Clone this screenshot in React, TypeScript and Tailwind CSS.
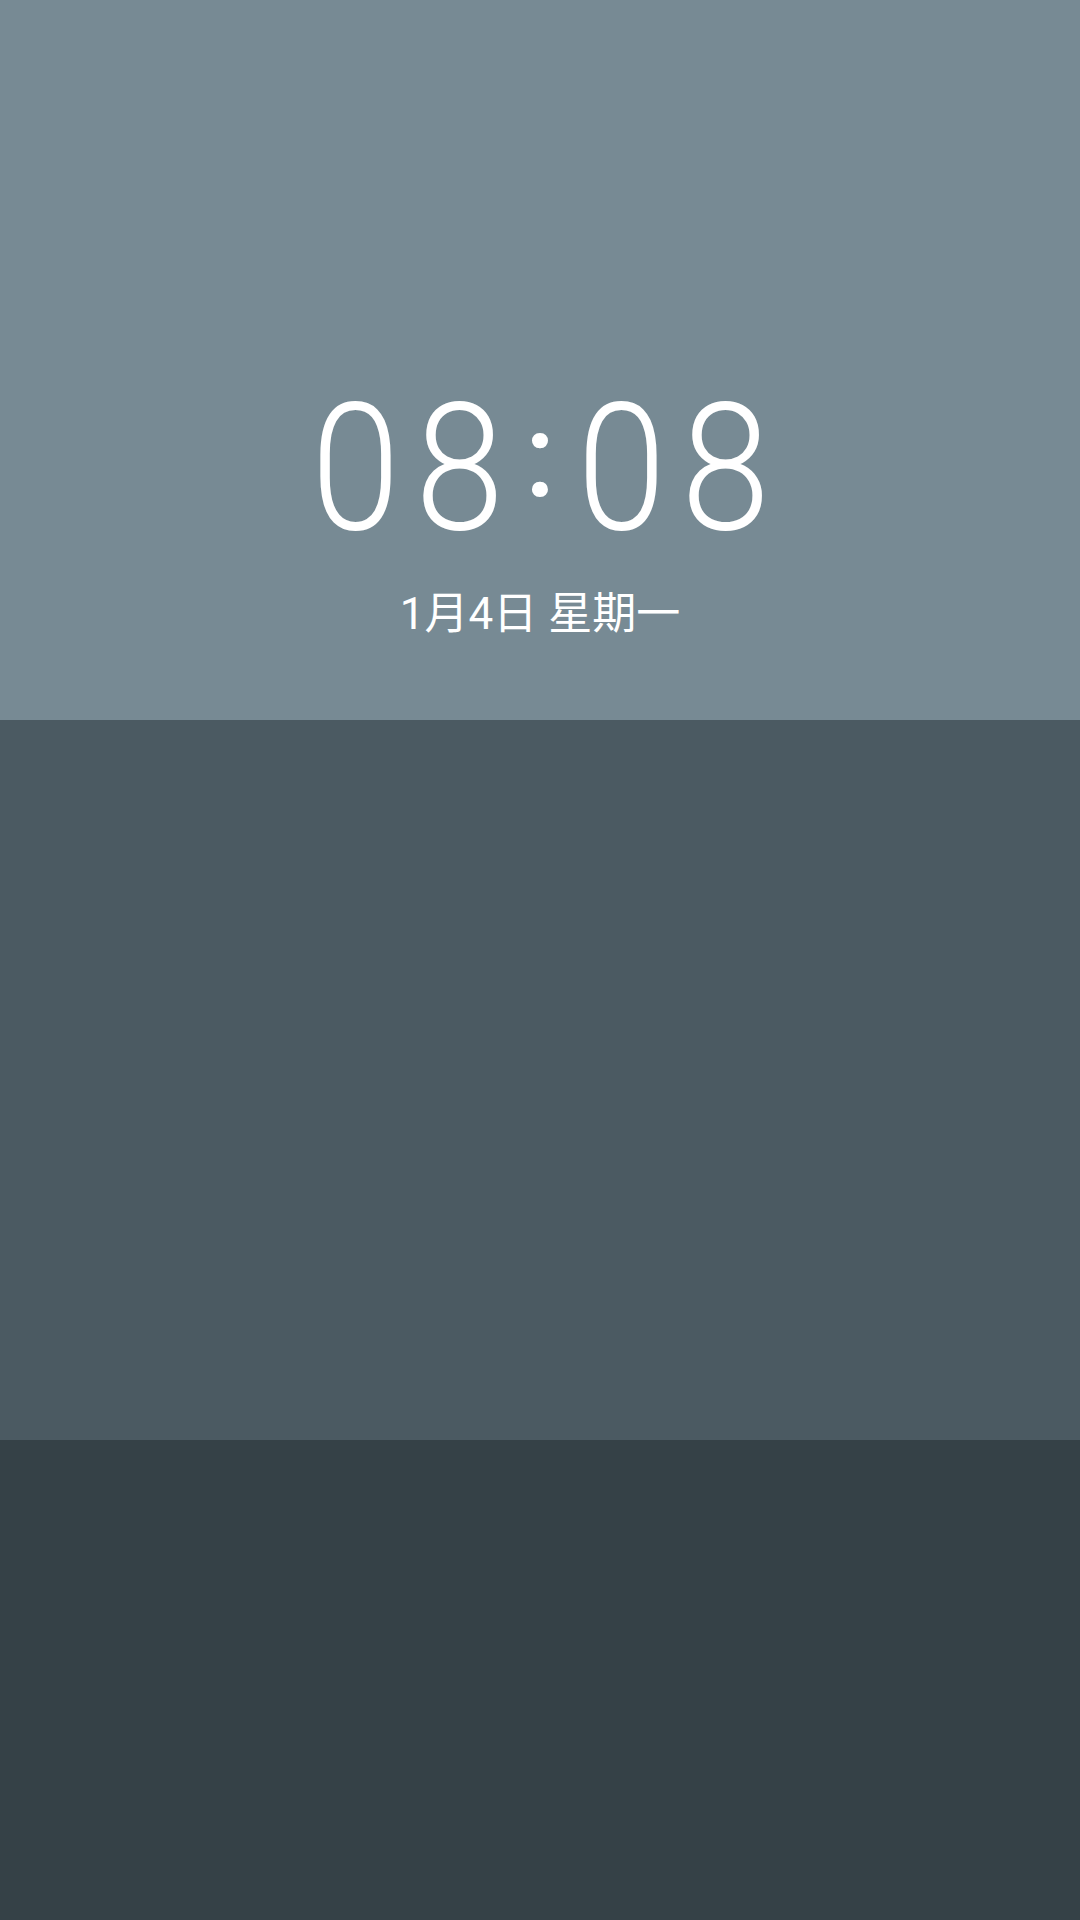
import React from 'react';

const Digit = ({ d }: { d: string }) => (
  <span className="w-[104px] text-center">
    <span className="inline-block scale-x-[0.9]">{d}</span>
  </span>
);

const LockScreen = () => {
  return (
    <div className="w-[1080px] h-[1920px] flex flex-col font-['Roboto','Noto_Sans_CJK_SC',sans-serif] text-white">
      {/* clock band */}
      <div className="h-[720px] bg-[#778a94] flex flex-col items-center pt-[379px]">
        <div className="flex items-start text-[178px] leading-none font-light">
          <Digit d="0" />
          <Digit d="8" />
          <span className="w-[58px] mt-[19px] text-center text-[116px] font-medium">:</span>
          <Digit d="0" />
          <Digit d="8" />
        </div>
        <div className="mt-[35px] text-[44px] leading-none">1月4日 星期一</div>
      </div>
      <div className="h-[720px] bg-[#4b5a62]" />
      <div className="h-[480px] bg-[#354147]" />
    </div>
  );
};

export default function App() {
  return <LockScreen />;
}
